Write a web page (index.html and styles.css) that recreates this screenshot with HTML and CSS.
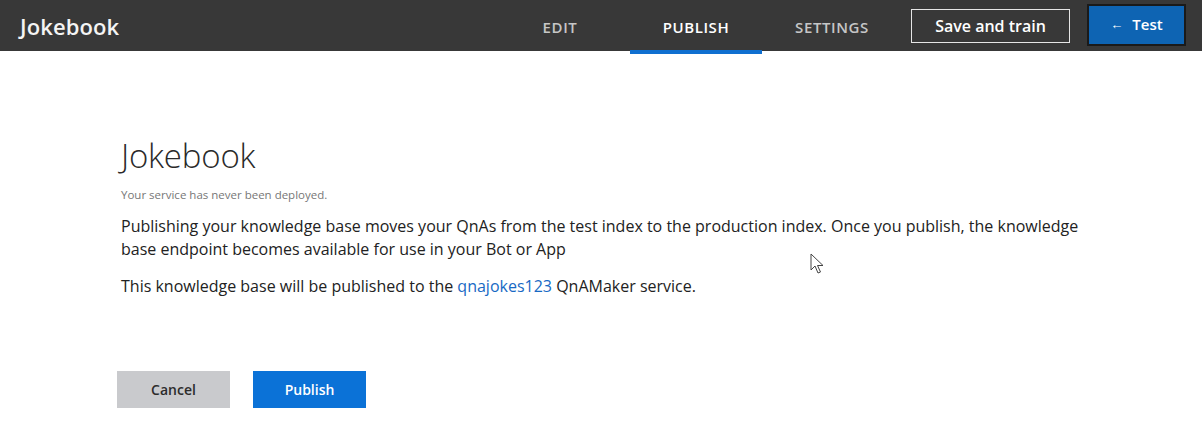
FILE: index.html
```html
<!DOCTYPE html>
<html lang="en">
<head>
<meta charset="utf-8">
<title>Jokebook - Publish</title>
<link rel="stylesheet" href="styles.css">
</head>
<body>
<header class="topbar">
  <div class="brand">Jokebook</div>
  <nav class="tabs">
    <a class="tab">EDIT</a>
    <a class="tab active">PUBLISH</a>
    <a class="tab">SETTINGS</a>
  </nav>
  <button class="btn-outline">Save and train</button>
  <button class="btn-test"><span class="arrow">&larr;</span>Test</button>
</header>
<main class="content">
  <h1 class="title">Jokebook</h1>
  <p class="status">Your service has never been deployed.</p>
  <p class="desc">Publishing your knowledge base moves your QnAs from the test index to the production index. Once you publish, the knowledge base endpoint becomes available for use in your Bot or App</p>
  <p class="desc target">This knowledge base will be published to the <a class="link">qnajokes123</a> QnAMaker service.</p>
  <div class="actions">
    <button class="btn btn-cancel">Cancel</button>
    <button class="btn btn-publish">Publish</button>
  </div>
</main>
<svg class="cursor" width="14" height="22" viewBox="0 0 14 22" aria-hidden="true">
  <path d="M1 1 L1 17 L5 13 L8 20 L10.5 19 L7.5 12.5 L13 12.5 Z" fill="#fff" stroke="#444" stroke-width="1" stroke-linejoin="round"/>
</svg>
</body>
</html>
```

FILE: styles.css
```css
* { box-sizing: border-box; }
html, body { margin: 0; padding: 0; background: #fff; }
body {
  font-family: "Open Sans", "Noto Sans", "Liberation Sans", sans-serif;
  color: #222;
  position: relative;
  width: 1202px;
  height: 441px;
  overflow: hidden;
}
.topbar {
  height: 51px;
  background: #383838;
  display: flex;
  align-items: center;
  padding: 0 16px 0 20px;
}
.brand {
  color: #f4f4f4;
  font-size: 22px;
  font-weight: 600;
  letter-spacing: 0.1px;
  flex: 1;
}
.tabs {
  display: flex;
  gap: 4px;
  height: 51px;
}
.tab {
  width: 132px;
  display: flex;
  align-items: center;
  justify-content: center;
  color: #c6c6c6;
  font-size: 15px;
  font-weight: 600;
  letter-spacing: 0.6px;
  padding-top: 2px;
  position: relative;
}
.tab.active { color: #fff; }
.tab.active::after {
  content: "";
  position: absolute;
  left: 0; right: 0;
  bottom: -3px;
  height: 4px;
  background: #0f6fd0;
}
.btn-outline {
  margin-left: 13px;
  width: 159px;
  height: 34px;
  background: transparent;
  border: 1px solid #e6e6e6;
  color: #fff;
  font-family: inherit;
  font-size: 16px;
  font-weight: 600;
  padding: 0;
}
.btn-test {
  margin-left: 17px;
  width: 99px;
  height: 42px;
  background: #0e64b3;
  border: 2px solid #1a1a1a;
  color: #fff;
  font-family: inherit;
  font-size: 15px;
  font-weight: 600;
  display: flex;
  align-items: center;
  justify-content: center;
  gap: 9px;
  padding: 0 0 3px 0;
  margin-top: -1px;
}
.arrow { font-size: 13px; font-weight: 400; }
.content {
  padding: 84px 0 0 121px;
  width: 1102px;
}
.title {
  margin: 0;
  font-size: 33px;
  font-weight: 300;
  color: #2a2a2a;
  line-height: 42px;
  letter-spacing: -0.2px;
}
.status {
  margin: 10px 0 0;
  font-size: 11.5px;
  color: #777;
  line-height: 16px;
}
.desc {
  margin: 12px 0 0;
  font-size: 16px;
  line-height: 23px;
  color: #222;
}
.desc.target { margin-top: 14px; }
.link { color: #1769c4; font-weight: 500; }
.actions {
  display: flex;
  gap: 23px;
  margin: 73px 0 0 -4px;
}
.btn {
  width: 113px;
  height: 37px;
  border: none;
  font-family: inherit;
  font-size: 14px;
  font-weight: 600;
  padding: 0;
}
.btn-cancel { background: #c9cacd; color: #2c2c2c; }
.btn-publish { background: #0b72d7; color: #fff; }
.cursor {
  position: absolute;
  left: 810px;
  top: 253px;
}
```
